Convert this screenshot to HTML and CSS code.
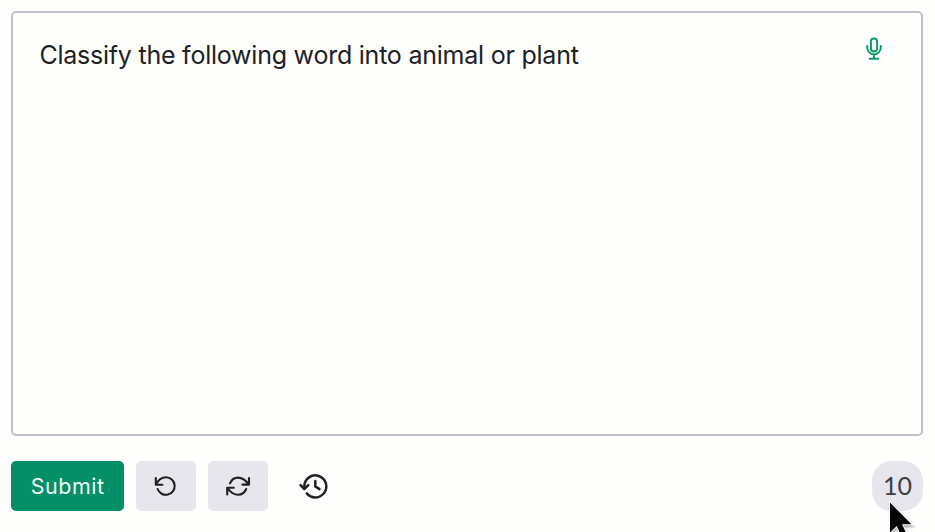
FILE: index.html
```html
<!DOCTYPE html>
<html lang="en">
<head>
<meta charset="utf-8">
<title>Playground</title>
<link rel="stylesheet" href="styles.css">
</head>
<body>
<main class="playground">
  <section class="editor">
    <p class="prompt">Classify the following word into animal or plant</p>
    <svg class="mic" viewBox="0 0 18 24">
      <rect x="5.9" y="1.4" width="6.2" height="13.2" rx="3.1"/>
      <path d="M2.2 9v1.6a6.8 6.8 0 0 0 13.6 0V9M9 17.5v4.3M4.7 21.8h8.6"/>
    </svg>
  </section>
  <footer class="toolbar">
    <button class="button submit">Submit</button>
    <button class="button icon-button" aria-label="Undo">
      <svg class="icon" viewBox="0 0 28 28"><path d="M3.8 6v6.8h6.6M4 12.6C6.4 7.4 9.4 5.2 14 5.2a8.8 8.8 0 1 1-8.4 11.8"/></svg>
    </button>
    <button class="button icon-button" aria-label="Regenerate">
      <svg class="icon" viewBox="0 0 28 28"><path d="M25 6v6.6h-6.6M6 11.4C7.6 7.6 10.4 5.6 14 5.6c4.6 0 7.6 2.6 10.6 6.8M3.2 22.4v-6.6h6.6M22.2 17c-1.6 3.8-4.4 5.8-8 5.8-4.6 0-7.8-2.6-10.8-6.8"/></svg>
    </button>
    <button class="button history" aria-label="History">
      <svg class="icon" viewBox="0 0 28 28"><path d="M4.3 16.5V14a11 11 0 1 1 2.5 7.4M.5 13.2l3.8 3.8 4-3.8M15.3 9v5.4l4.2 2.7"/></svg>
    </button>
    <span class="count">10
      <svg class="cursor" viewBox="0 0 28 38"><path d="M4 3.5v30l6.8-6.6 5 11 5-2.3-4.7-10.3h9.4z"/></svg>
    </span>
  </footer>
</main>
</body>
</html>
```
FILE: styles.css
```css
* { box-sizing: border-box; }
body {
  margin: 0;
  height: 532px;
  overflow: hidden;
  background: #fefefd;
  color: #202123;
  font-family: Inter, "Liberation Sans", sans-serif;
}
.playground { padding: 11px 12px 0 11.4px; }
.editor {
  display: flex;
  justify-content: space-between;
  align-items: flex-start;
  height: 425px;
  padding: 24px 38px 0 26px;
  border: 2px solid #c0c0cd;
  border-radius: 5px;
}
.prompt {
  margin: 0;
  font-size: 25px;
  line-height: 37px;
  letter-spacing: -0.23px;
  white-space: nowrap;
}
.mic {
  width: 18px;
  height: 24px;
  fill: none;
  stroke: #10996f;
  stroke-width: 2;
  stroke-linecap: round;
}
.toolbar { display: flex; align-items: center; padding-top: 25px; }
.button {
  display: flex;
  align-items: center;
  justify-content: center;
  height: 50px;
  padding: 0;
  border: 0;
  border-radius: 5px;
  color: inherit;
}
.submit {
  width: 112.6px;
  margin-right: 12.3px;
  padding-bottom: 1px;
  background: #048f67;
  color: #eefaf5;
  font: 21.5px Inter, sans-serif;
  letter-spacing: 0.5px;
}
.icon-button { width: 60px; margin-right: 12px; background: #e7e6ed; }
.history { width: 28px; margin-left: 20px; background: none; }
.icon {
  width: 28px;
  height: 28px;
  fill: none;
  stroke: #202123;
  stroke-width: 2.1;
  stroke-linecap: round;
  stroke-linejoin: round;
}
.history .icon { stroke-width: 2.5; overflow: visible; }
.count {
  position: relative;
  width: 51px;
  height: 50px;
  margin-left: auto;
  border-radius: 20px;
  background: #e7e6ed;
  color: #3d3d44;
  font: 25px/49px Lato, sans-serif;
  text-align: center;
}
.cursor {
  position: absolute;
  left: 14px;
  top: 38px;
  width: 28px;
  height: 38px;
  overflow: visible;
  fill: #050505;
  stroke: #fff;
  stroke-width: 2;
  paint-order: stroke;
  filter: drop-shadow(1px 2px 1px #0005);
}
```
